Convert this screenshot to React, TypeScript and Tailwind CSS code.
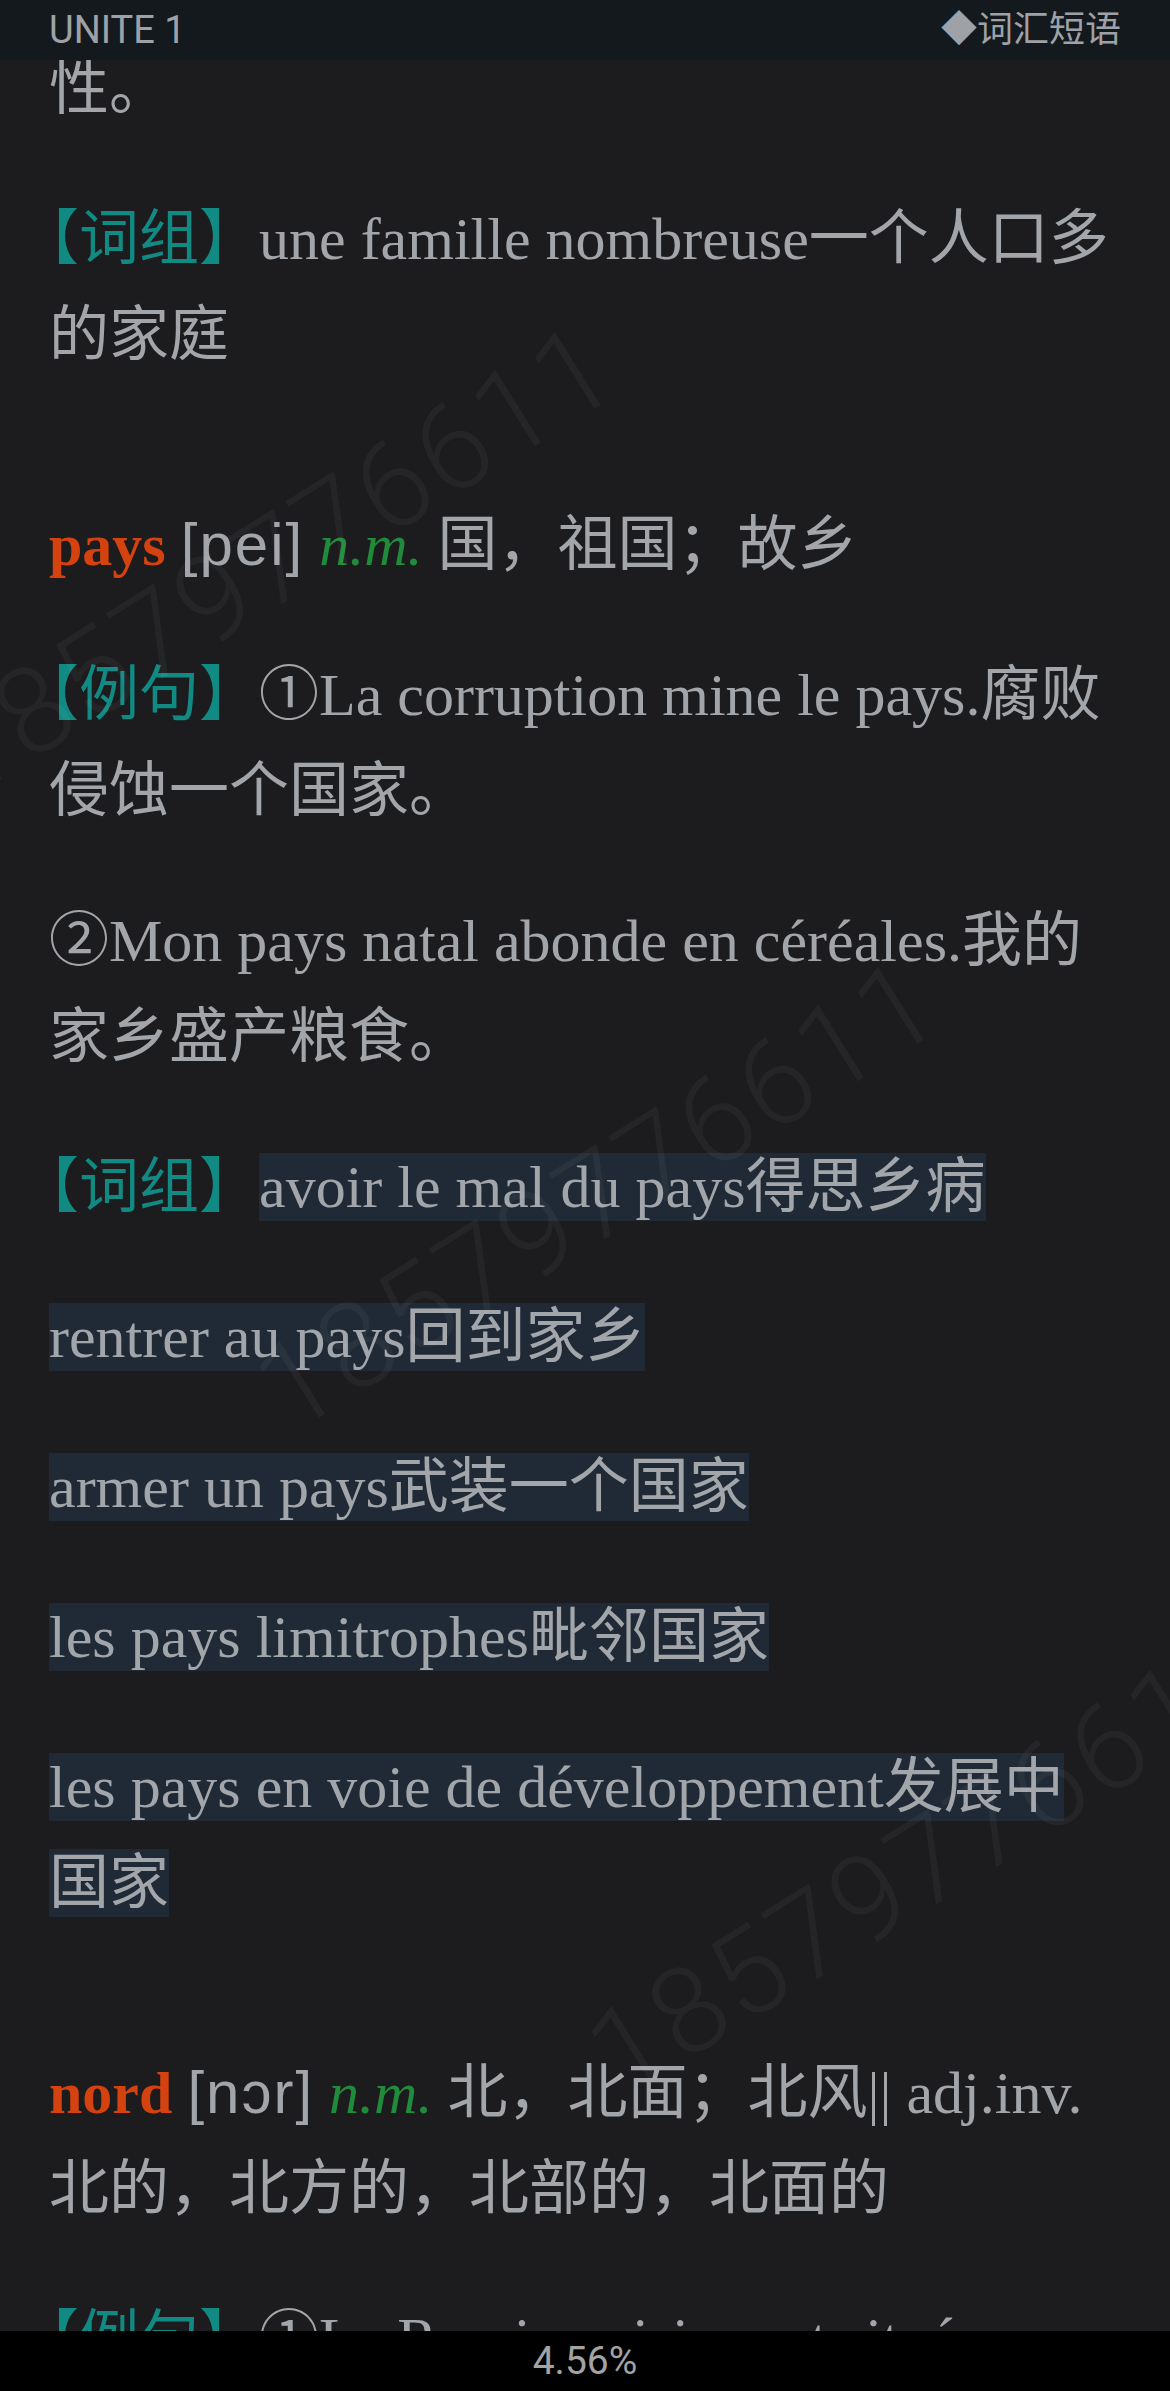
import React from 'react';

// reading view of a vocab page (dark mode), text sizes are at 3x device scale
const serif = "font-['Liberation_Serif','Noto_Sans_CJK_SC',serif]";

function Tag({ children }: { children: React.ReactNode }) {
  return (
    <span className="text-[#108a83]">
      <span className="font-['Noto_Sans_CJK_SC',sans-serif] leading-[0] [font-feature-settings:'halt']">【</span>
      {children}】
    </span>
  );
}

function Hl({ children }: { children: React.ReactNode }) {
  return <span className="bg-[#202a36] py-[1px] [box-decoration-break:clone]">{children}</span>;
}

function Head({ word, ipa, pos, def }: { word: string; ipa: string; pos: string; def: string }) {
  return (
    <p className="mt-[114px]">
      <span className="font-bold text-[#d4420f]">{word}</span>{' '}
      <span className="font-['Liberation_Sans','DejaVu_Sans',sans-serif] leading-[0] text-[60px] tracking-[2px] text-[#a2a5aa]">[{ipa}]</span>{' '}
      <span className="italic text-[#1f8b3b]">{pos}</span> {def}
    </p>
  );
}

const marks = [
  'left-[275px] top-[560px]',
  'left-[598px] top-[1195px]',
  'left-[930px] top-[1860px]',
];

export default function App() {
  return (
    <div className={`relative h-[2391px] w-full overflow-hidden bg-[#1c1c1e] ${serif}`}>
      <header className="absolute inset-x-0 top-0 z-20 flex h-[60px] items-center justify-between bg-[#14191d] px-[49px] font-['Roboto','Noto_Sans_CJK_SC',sans-serif] text-[38px] text-[#9ea2a7]">
        <span>UNITE 1</span>
        <span className="text-[36px]">◆词汇短语</span>
      </header>

      <main className="px-[49px] pt-[41px] text-[60px] leading-[96px] text-[#a2a5aa]">
        <p>性。</p>
        <p className="mt-[54px]">
          <Tag>词组</Tag>une famille nombreuse一个人口多的家庭
        </p>

        <Head word="pays" ipa="pei" pos="n.m." def="国，祖国；故乡" />
        <p className="mt-[54px]">
          <Tag>例句</Tag>①La corruption mine le pays.腐败侵蚀一个国家。
        </p>
        <p className="mt-[54px]">②Mon pays natal abonde en céréales.我的家乡盛产粮食。</p>
        <p className="mt-[54px]">
          <Tag>词组</Tag>
          <Hl>avoir le mal du pays得思乡病</Hl>
        </p>
        <p className="mt-[54px]">
          <Hl>rentrer au pays回到家乡</Hl>
        </p>
        <p className="mt-[54px]">
          <Hl>armer un pays武装一个国家</Hl>
        </p>
        <p className="mt-[54px]">
          <Hl>les pays limitrophes毗邻国家</Hl>
        </p>
        <p className="mt-[54px]">
          <Hl>les pays en voie de développement发展中国家</Hl>
        </p>

        <Head word="nord" ipa="nɔr" pos="n.m." def="北，北面；北风|| adj.inv.北的，北方的，北部的，北面的" />
        <p className="mt-[54px]">
          <Tag>例句</Tag>①La Russie voisine est située au nord de la Chine.
        </p>
      </main>

      {marks.map((pos) => (
        <div
          key={pos}
          className={`pointer-events-none absolute ${pos} z-10 -translate-x-1/2 -translate-y-1/2 rotate-[-32deg] whitespace-nowrap font-['Roboto',sans-serif] text-[120px] font-light tracking-[4px] text-white/[0.045]`}
        >
          18579776611
        </div>
      ))}

      <footer className="absolute inset-x-0 bottom-0 z-20 flex h-[60px] items-center justify-center bg-black font-['Roboto',sans-serif] text-[39px] text-[#a3a3a3]">
        4.56%
      </footer>
    </div>
  );
}
